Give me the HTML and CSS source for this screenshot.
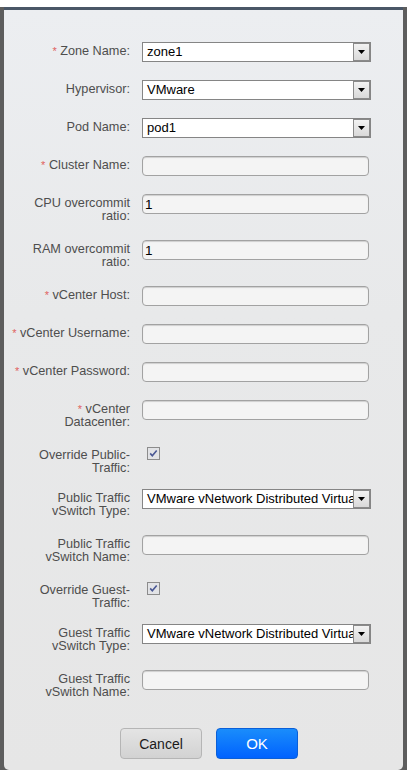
FILE: index.html
```html
<!DOCTYPE html>
<html>
<head>
<meta charset="utf-8">
<link rel="stylesheet" href="styles.css">
</head>
<body>
<div class="topstrip"></div>
<div class="dialog">
  <form class="form">
    <div class="row">
      <label class="name"><span class="req">*</span> Zone Name:</label>
      <div class="select"><span class="sel-text">zone1</span><span class="sel-btn"><svg width="7" height="4" viewBox="0 0 7 4"><path d="M0 0h7L3.5 4z" fill="#000"/></svg></span></div>
    </div>
    <div class="row">
      <label class="name">Hypervisor:</label>
      <div class="select"><span class="sel-text">VMware</span><span class="sel-btn"><svg width="7" height="4" viewBox="0 0 7 4"><path d="M0 0h7L3.5 4z" fill="#000"/></svg></span></div>
    </div>
    <div class="row">
      <label class="name">Pod Name:</label>
      <div class="select"><span class="sel-text">pod1</span><span class="sel-btn"><svg width="7" height="4" viewBox="0 0 7 4"><path d="M0 0h7L3.5 4z" fill="#000"/></svg></span></div>
    </div>
    <div class="row">
      <label class="name"><span class="req">*</span> Cluster Name:</label>
      <input class="text" type="text" value="">
    </div>
    <div class="row">
      <label class="name">CPU overcommit<br>ratio:</label>
      <input class="text" type="text" value="1">
    </div>
    <div class="row">
      <label class="name">RAM overcommit<br>ratio:</label>
      <input class="text" type="text" value="1">
    </div>
    <div class="row">
      <label class="name"><span class="req">*</span> vCenter Host:</label>
      <input class="text" type="text" value="">
    </div>
    <div class="row">
      <label class="name"><span class="req">*</span> vCenter Username:</label>
      <input class="text" type="text" value="">
    </div>
    <div class="row">
      <label class="name"><span class="req">*</span> vCenter Password:</label>
      <input class="text" type="password" value="">
    </div>
    <div class="row">
      <label class="name"><span class="req">*</span> vCenter<br>Datacenter:</label>
      <input class="text" type="text" value="">
    </div>
    <div class="row row-check">
      <label class="name">Override Public-<br>Traffic:</label>
      <span class="check"><svg width="13" height="13" viewBox="0 0 13 13"><rect x="0.5" y="0.5" width="12" height="12" fill="#e2e3e6" stroke="#8c8c8c"/><path d="M3.2 6.4l2.1 2.4 4.4-5.4" fill="none" stroke="#4a5894" stroke-width="1.6"/></svg></span>
    </div>
    <div class="row">
      <label class="name">Public Traffic<br>vSwitch Type:</label>
      <div class="select"><span class="sel-text">VMware vNetwork Distributed Virtual Switch</span><span class="sel-btn"><svg width="7" height="4" viewBox="0 0 7 4"><path d="M0 0h7L3.5 4z" fill="#000"/></svg></span></div>
    </div>
    <div class="row">
      <label class="name">Public Traffic<br>vSwitch Name:</label>
      <input class="text" type="text" value="">
    </div>
    <div class="row row-check">
      <label class="name">Override Guest-<br>Traffic:</label>
      <span class="check"><svg width="13" height="13" viewBox="0 0 13 13"><rect x="0.5" y="0.5" width="12" height="12" fill="#e2e3e6" stroke="#8c8c8c"/><path d="M3.2 6.4l2.1 2.4 4.4-5.4" fill="none" stroke="#4a5894" stroke-width="1.6"/></svg></span>
    </div>
    <div class="row">
      <label class="name">Guest Traffic<br>vSwitch Type:</label>
      <div class="select"><span class="sel-text">VMware vNetwork Distributed Virtual Switch</span><span class="sel-btn"><svg width="7" height="4" viewBox="0 0 7 4"><path d="M0 0h7L3.5 4z" fill="#000"/></svg></span></div>
    </div>
    <div class="row">
      <label class="name">Guest Traffic<br>vSwitch Name:</label>
      <input class="text" type="text" value="">
    </div>
    <div class="actions">
      <button type="button" class="btn cancel">Cancel</button>
      <button type="button" class="btn ok">OK</button>
    </div>
  </form>
</div>
</body>
</html>
```

FILE: styles.css
```css
html, body {
  margin: 0;
  padding: 0;
}
body {
  width: 407px;
  height: 770px;
  overflow: hidden;
  background: #5d5d5d;
  font-family: "Liberation Sans", Arial, sans-serif;
}
.topstrip {
  height: 7px;
  background: #ffffff;
}
.dialog {
  margin: 0 4px;
  height: 760px;
  border-top: 3px solid #4a5767;
  border-radius: 0 0 5px 5px;
  background: linear-gradient(#eceef1 0%, #e8e9ea 40%, #e6e6e6 100%);
}
.form {
  padding-top: 32px;
  margin: 0;
}
.row {
  display: flex;
  align-items: flex-start;
  margin-bottom: 18px;
}
.row-check {
  margin-bottom: 15px;
}
.name {
  flex: 0 0 126px;
  width: 126px;
  margin-right: 12px;
  padding-top: 3px;
  text-align: right;
  font-size: 12.7px;
  line-height: 12.5px;
  color: #4e4e4e;
  white-space: nowrap;
}
.req {
  color: #e0625f;
  font-size: 11px;
}
.select {
  box-sizing: border-box;
  width: 229px;
  height: 20px;
  border: 1px solid #858585;
  background: #ffffff;
  display: flex;
  align-items: stretch;
}
.sel-text {
  flex: 1;
  overflow: hidden;
  white-space: nowrap;
  font-size: 13px;
  line-height: 18px;
  color: #000;
  padding-left: 4px;
}
.sel-btn {
  box-sizing: border-box;
  flex: 0 0 17px;
  border: 1px solid #8a8a8a;
  margin: 0;
  background: linear-gradient(#f2f2f2, #d9d9d9);
  display: flex;
  align-items: center;
  justify-content: center;
}
.text {
  box-sizing: border-box;
  width: 227px;
  height: 20px;
  margin: 0;
  padding: 0 2px;
  border: 1px solid #a2a2a2;
  border-radius: 4px;
  background: #f4f4f4;
  box-shadow: inset 0 1px 1px #cfcfcf;
  font-family: "Liberation Sans", Arial, sans-serif;
  font-size: 13.5px;
  color: #000;
  outline: none;
}
.check {
  display: block;
  width: 13px;
  height: 13px;
  margin-left: 5px;
  margin-top: 1px;
}
.check svg {
  display: block;
}
.actions {
  display: flex;
  gap: 14px;
  padding-left: 116px;
  padding-top: 12px;
}
.btn {
  box-sizing: border-box;
  width: 82px;
  height: 31px;
  border-radius: 4px;
  font-family: "Liberation Sans", Arial, sans-serif;
  font-size: 14px;
  cursor: pointer;
}
.cancel {
  border: 1px solid #b5b5b5;
  background: linear-gradient(#e4e4e4, #d2d2d2);
  color: #1a1a1a;
}
.ok {
  border: 1px solid #0a5fd8;
  background: linear-gradient(#1a8dfb, #0062ff);
  color: #ffffff;
  font-size: 15px;
}
```
